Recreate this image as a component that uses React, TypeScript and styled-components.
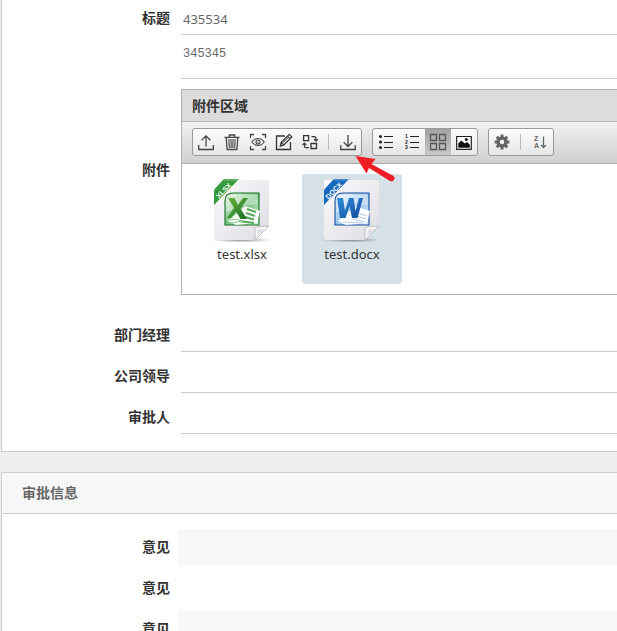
import React from 'react';
import styled, { createGlobalStyle, css } from 'styled-components';

const GlobalStyle = createGlobalStyle`
  *, *::before, *::after { box-sizing: border-box; }
  body {
    margin: 0;
    background: #efefef;
    color: #333;
    font: 13px/20px "Noto Sans", "Noto Sans CJK SC", sans-serif;
    overflow: hidden;
  }
`;

const Page = styled.main`
  display: flex;
  flex-direction: column;
  gap: 20px;
  padding-left: 1px;
`;

const Panel = styled.section<{ $open?: boolean }>`
  background: #fff;
  border: 1px solid #ccc;
  border-right: 0;
  ${(p) => p.$open && css`border-top: 0;`}
`;

const PanelTitle = styled.h2`
  margin: 0;
  padding: 0 20px;
  background: #f7f7f7;
  border-bottom: 1px solid #ccc;
  color: #666;
  font-size: 14px;
  font-weight: 700;
  line-height: 40px;
`;

const Form = styled.form`
  display: flex;
  flex-direction: column;
  gap: 8px;
  padding-bottom: 19px;
`;

const ReviewForm = styled.form`
  display: flex;
  flex-direction: column;
  gap: 5px;
  padding: 15px 0;
`;

const Row = styled.div<{ $gap: number }>`
  display: grid;
  grid-template-columns: 168px minmax(0, 1fr);
  column-gap: ${(p) => p.$gap}px;
  align-items: center;
`;

const labelText = css`
  color: #333;
  font-size: 14px;
  font-weight: 700;
  line-height: 36px;
  text-align: right;
`;

const Label = styled.label`${labelText}`;
const GroupLabel = styled.span`${labelText}`;

const LineInput = styled.input`
  width: 100%;
  height: 33px;
  padding: 2px 2px 0;
  border: 0;
  border-bottom: 1px solid #ccc;
  border-radius: 0;
  outline: 0;
  background: transparent;
  color: #666;
  font: inherit;
`;

const FieldRow = styled(Row)`
  height: 33px;
`;

const LineArea = styled.textarea`
  display: block;
  width: 100%;
  height: 38px;
  padding: 3px 2px;
  border: 0;
  border-bottom: 1px solid #ccc;
  outline: 0;
  resize: none;
  background: transparent;
  color: #666;
  font: 12px/20px "Liberation Mono", monospace;
`;

const ReviewInput = styled.input<{ $shaded: boolean }>`
  width: 100%;
  height: 36px;
  padding: 0 5px;
  border: 0;
  outline: 0;
  background: ${(p) => (p.$shaded ? '#f7f7f7' : '#fff')};
  color: #666;
  font: inherit;
`;

const AttachmentCell = styled.div`
  display: flex;
  flex-direction: column;
  gap: 10px;
  padding-bottom: 4px;
  margin-bottom: 10px;
`;

const AttachmentRow = styled(Row)`
  & > ${GroupLabel} { margin-bottom: 10px; }
`;

const Uploader = styled.div`
  position: relative;
  border: 1px solid #b0b0b0;
  border-right: 0;
  background: #fff;
`;

const UploaderTitle = styled.div`
  height: 32px;
  padding: 0 10px;
  background: #dcdcdc;
  border-bottom: 1px solid #b8b8b8;
  font-size: 14px;
  font-weight: 700;
  line-height: 31px;
`;

const Toolbar = styled.div`
  display: flex;
  gap: 10px;
  height: 42px;
  padding: 6px 10px 7px;
  border-bottom: 1px solid #b0b0b0;
  background: linear-gradient(#f1f1f1, #cfd0cf);
`;

const ButtonGroup = styled.div`
  display: flex;
  align-items: center;
  border: 1px solid #999;
  border-radius: 3px;
  background: linear-gradient(#fdfdfd, #e6e6e6);
  overflow: hidden;
`;

const ToolButton = styled.button<{ $active?: boolean }>`
  width: 26px;
  height: 26px;
  padding: 0;
  border: 0;
  background: ${(p) => (p.$active ? 'linear-gradient(#a2a2a2, #c8c8c8)' : 'transparent')};
  cursor: pointer;

  svg { display: block; }
`;

const Divider = styled.span`
  width: 1px;
  height: 16px;
  margin: 0 6px 0 5px;
  background: #bbb;
`;

const FileList = styled.div`
  display: flex;
  gap: 10px;
  height: 130px;
  padding: 10px;
`;

const FileTile = styled.button<{ $selected?: boolean }>`
  display: flex;
  flex-direction: column;
  align-items: center;
  width: 100px;
  height: 110px;
  padding: 4px 0 0;
  border: 0;
  border-radius: 3px;
  background: ${(p) => (p.$selected ? '#d6e0e7' : 'transparent')};
  color: #333;
  font: inherit;
  cursor: pointer;
`;

const Pointer = styled.svg`
  position: absolute;
  left: 172px;
  top: 64px;
  pointer-events: none;
`;

const Icon = ({ children, color = '#444' }: { children: React.ReactNode; color?: string }) => (
  <svg width="26" height="26" viewBox="0 0 26 26" fill="none" stroke={color} strokeWidth="1.3" aria-hidden="true">
    {children}
  </svg>
);

const UploadIcon = () => (
  <Icon><path d="M5.7 16v4.5h14.6V16M13 17.5V6.8M8.6 11.2 13 6.8l4.4 4.4" /></Icon>
);

const TrashIcon = () => (
  <Icon>
    <path d="M5.5 8.3h15M10.3 8V6h5.4v2M7.2 8.5l.9 12h9.8l.9-12" />
    <path d="m9.9 10 .5 9M12 10l.2 9M14 10l-.2 9M16.1 10l-.5 9" strokeWidth="1.1" />
  </Icon>
);

const PreviewIcon = () => (
  <Icon>
    <path d="M5.5 9V5.5H9M17 5.5h3.5V9M20.5 17v3.5H17M9 20.5H5.5V17" />
    <path d="M6.8 13c3.3-4.6 9.1-4.6 12.4 0-3.3 4.6-9.1 4.6-12.4 0Z" strokeWidth="1.1" />
    <circle cx="13" cy="13" r="2" strokeWidth="1.1" />
    <circle cx="13" cy="13" r=".6" fill="#444" stroke="none" />
  </Icon>
);

const EditIcon = () => (
  <Icon color="#333">
    <path d="M14 7H5.5v13.5h14V13" />
    <path d="m9.3 17 .9-3.7 8.1-8 2.5 2.6-8 8ZM16.5 7.1l2.5 2.6M10.2 13.3l2.6 2.6" strokeWidth="1.2" />
    <path d="m11.8 13.7 5.8-5.6" strokeWidth="1" />
  </Icon>
);

const SwapIcon = () => (
  <Icon color="#333">
    <path d="M6.6 6.6h5v5h-5zM14 14.5h5.5v5H14z" />
    <path d="M14.5 7.6h2.3c1.4 0 2.2.8 2.2 2.2v2M17 10.2l2 2 1.8-2M11.8 18.6H9.5c-1.4 0-2.2-.8-2.2-2.2v-2M5.5 16l1.8-2 2 2" strokeWidth="1.1" />
  </Icon>
);

const DownloadIcon = () => (
  <Icon><path d="M5.7 16.3v4.2h14.6v-4.2M13 6v11.5M8.6 13.1l4.4 4.4 4.4-4.4" /></Icon>
);

const BulletListIcon = () => (
  <Icon color="#222">
    <path d="M11 7.5h9M11 13.5h9M11 18.5h9" strokeWidth="1.1" />
    <g fill="#222" stroke="none">
      <circle cx="7.5" cy="7.5" r="1.5" />
      <circle cx="7.5" cy="13" r="1.5" />
      <circle cx="7.5" cy="18.5" r="1.5" />
    </g>
  </Icon>
);

const NumberListIcon = () => (
  <Icon color="#222">
    <path d="M11 7.5h9M11 13.5h9M11 18.5h9" strokeWidth="1.1" />
    <g fill="#222" stroke="none" fontFamily="Liberation Sans, sans-serif" fontSize="5" fontWeight="700">
      <text x="6" y="9">1</text>
      <text x="6" y="15">2</text>
      <text x="6" y="20">3</text>
    </g>
  </Icon>
);

const GridIcon = () => (
  <Icon color="#555">
    <path d="M5.5 5.5h6v6h-6zM14.5 5.5h6v6h-6zM5.5 14.5h6v6h-6zM14.5 14.5h6v6h-6z" />
  </Icon>
);

const PictureIcon = () => (
  <Icon color="#222">
    <path d="M5.7 7.5h14.6v12.8H5.7z" strokeWidth="1.2" fill="#fff" />
    <path d="M7.3 18.8v-4.2l3-3.2 3.5 3.2 2.1-1.5 2.9 2.5v3.2Z" fill="#111" stroke="none" />
    <circle cx="15.3" cy="10.6" r="1.5" fill="#111" stroke="none" />
  </Icon>
);

const GearIcon = () => (
  <Icon color="#666">
    <circle cx="13" cy="13" r="4" strokeWidth="3.4" />
    {[0, 45, 90, 135, 180, 225, 270, 315].map((angle) => (
      <path key={angle} d="M13 8.5V5.6" strokeWidth="3" transform={`rotate(${angle} 13 13)`} />
    ))}
  </Icon>
);

const SortIcon = () => (
  <Icon color="#666">
    <g fill="#666" stroke="none" fontFamily="Liberation Sans, sans-serif" fontSize="7" fontWeight="700">
      <text x="7" y="12">Z</text>
      <text x="7" y="19">A</text>
    </g>
    <path d="M16.5 7.5v11M14 16l2.5 2.6L19 16" />
  </Icon>
);

type FileKind = 'xlsx' | 'docx';

const FileArt = ({ kind }: { kind: FileKind }) => {
  const excel = kind === 'xlsx';
  const main = excel ? '#379b3b' : '#1769bd';
  const dark = excel ? '#176e25' : '#134b9c';
  const id = (name: string) => `${kind}-${name}`;
  return (
    <svg width="60" height="66" viewBox="0 0 60 66" aria-hidden="true">
      <defs>
        <linearGradient id={id('paper')} x2="1" y2="1">
          <stop stopColor="#fbfbfd" />
          <stop offset="1" stopColor="#dcdce3" />
        </linearGradient>
        <linearGradient id={id('frame')} x2="1" y2="1">
          <stop stopColor={excel ? '#e5f5e2' : '#eaf4ff'} />
          <stop offset=".5" stopColor={excel ? '#79c381' : '#9fc5ea'} />
          <stop offset="1" stopColor={excel ? '#d8f2da' : '#dcebfa'} />
        </linearGradient>
        <linearGradient id={id('glyph')} x2="1" y2="1">
          <stop stopColor={excel ? '#68b43d' : '#2e8cdb'} />
          <stop offset="1" stopColor={dark} />
        </linearGradient>
        <radialGradient id={id('shade')}>
          <stop stopColor="#555" stopOpacity=".65" />
          <stop offset="1" stopColor="#555" stopOpacity="0" />
        </radialGradient>
      </defs>
      <ellipse cx="29" cy="62" rx="30" ry="2.5" fill={`url(#${id('shade')})`} />
      <path d="M3 2h51q3 0 3 3v43L43 62H5q-3 0-3-3V3q0-1 1-1Z" fill={`url(#${id('paper')})`} />
      <path d="M43 62V51q0-2 2-2l12-1Z" fill="#f9f9fb" stroke="#b3b3ba" strokeWidth=".8" />
      <path d="M45.5 58v-6.5L53 51Z" fill="#dedee4" />
      <path d="M21 15h26v32H13V23q0-8 8-8Z" fill={`url(#${id('frame')})`} stroke={dark} strokeWidth="1.1" />
      <path d="M22 16.5h23.5v10q-15-1-31 8V24q0-7.500 7.500-7.500Z" fill="#fff" opacity=".4" />
      <path d="m33 28 15 5-3 12-21 2-8-4Z" fill="#fff" opacity=".95" />
      {excel ? (
        <>
          <path d="m35 31 9 3M34 35l9 3M33 39l9 2.500M27 43l15 2" stroke="#55a95b" strokeWidth="2" />
          <path d="m19 45 12-2M18 42l9-1" stroke="#8bcb8e" strokeWidth="1" />
          <path d="M16 20h6.500l3.500 7 5-7H36l-7.500 10.500L35 41h-6.500L24 33.500 19 40h-4l7-10Z" fill={`url(#${id('glyph')})`} />
        </>
      ) : (
        <>
          <path d="m36 35 9 3M35 38l9 3M31 41l12 3M21 44l20 1" stroke="#b4cbe4" strokeWidth="1" />
          <path d="M15 20h6l2 13 4-13h4.500l2 13 3.500-13h4l-5.500 20H30l-2.500-12-4 12H18Z" fill={`url(#${id('glyph')})`} />
        </>
      )}
      <path d="M13 1h14L2 27V13Q2 11 4 9.500L10 3q1.500-2 3-2Z" fill={main} />
      <path d="M13 1h14l-2 2H12Z" fill="#fff" opacity=".18" />
      <text
        x="12" y="15" fill="#fff" textAnchor="middle" transform="rotate(-46 12 13)"
        fontFamily="Liberation Sans, sans-serif" fontSize="7" fontWeight="700"
      >
        {kind.toUpperCase()}
      </text>
    </svg>
  );
};

type Tool = { label: string; icon: React.ReactNode; active?: boolean } | null;

const toolGroups: Tool[][] = [
  [
    { label: '上传', icon: <UploadIcon /> },
    { label: '删除', icon: <TrashIcon /> },
    { label: '预览', icon: <PreviewIcon /> },
    { label: '编辑', icon: <EditIcon /> },
    { label: '替换', icon: <SwapIcon /> },
    null,
    { label: '下载', icon: <DownloadIcon /> },
  ],
  [
    { label: '列表', icon: <BulletListIcon /> },
    { label: '编号列表', icon: <NumberListIcon /> },
    { label: '网格', icon: <GridIcon />, active: true },
    { label: '图片', icon: <PictureIcon /> },
  ],
  [{ label: '设置', icon: <GearIcon /> }, null, { label: '排序', icon: <SortIcon /> }],
];

const files: { kind: FileKind; selected?: boolean }[] = [{ kind: 'xlsx' }, { kind: 'docx', selected: true }];

const approvers = [
  { id: 'manager', label: '部门经理' },
  { id: 'leader', label: '公司领导' },
  { id: 'approver', label: '审批人' },
];

export default function App() {
  return (
    <>
      <GlobalStyle />
      <Page>
        <Panel $open>
          <Form>
            <FieldRow $gap={11}>
              <Label htmlFor="title">标题</Label>
              <LineInput id="title" defaultValue="435534" />
            </FieldRow>
            <AttachmentRow $gap={11}>
              <GroupLabel id="attachments">附件</GroupLabel>
              <AttachmentCell role="group" aria-labelledby="attachments">
                <LineArea aria-labelledby="attachments" defaultValue="345345" />
                <Uploader>
                  <UploaderTitle>附件区域</UploaderTitle>
                  <Toolbar role="toolbar">
                    {toolGroups.map((group, g) => (
                      <ButtonGroup key={g}>
                        {group.map((tool, i) =>
                          tool ? (
                            <ToolButton key={i} type="button" aria-label={tool.label} $active={tool.active}>
                              {tool.icon}
                            </ToolButton>
                          ) : (
                            <Divider key={i} />
                          ),
                        )}
                      </ButtonGroup>
                    ))}
                  </Toolbar>
                  <FileList>
                    {files.map((file) => (
                      <FileTile key={file.kind} type="button" $selected={file.selected}>
                        <FileArt kind={file.kind} />
                        test.{file.kind}
                      </FileTile>
                    ))}
                  </FileList>
                  <Pointer width="42" height="30" viewBox="0 0 42 30" aria-hidden="true">
                    <path d="m1.500 2 20 3-4 5L39.500 22q2 2 .5 4t-4 1L15 14l-2.500 5.500Z" fill="#ee1c25" />
                  </Pointer>
                </Uploader>
              </AttachmentCell>
            </AttachmentRow>
            {approvers.map(({ id, label }) => (
              <FieldRow key={id} $gap={11}>
                <Label htmlFor={id}>{label}</Label>
                <LineInput id={id} />
              </FieldRow>
            ))}
          </Form>
        </Panel>
        <Panel>
          <PanelTitle>审批信息</PanelTitle>
          <ReviewForm>
            {[true, false, true].map((shaded, i) => (
              <Row key={i} $gap={8}>
                <Label htmlFor={`opinion-${i}`}>意见</Label>
                <ReviewInput id={`opinion-${i}`} $shaded={shaded} readOnly />
              </Row>
            ))}
          </ReviewForm>
        </Panel>
      </Page>
    </>
  );
}
